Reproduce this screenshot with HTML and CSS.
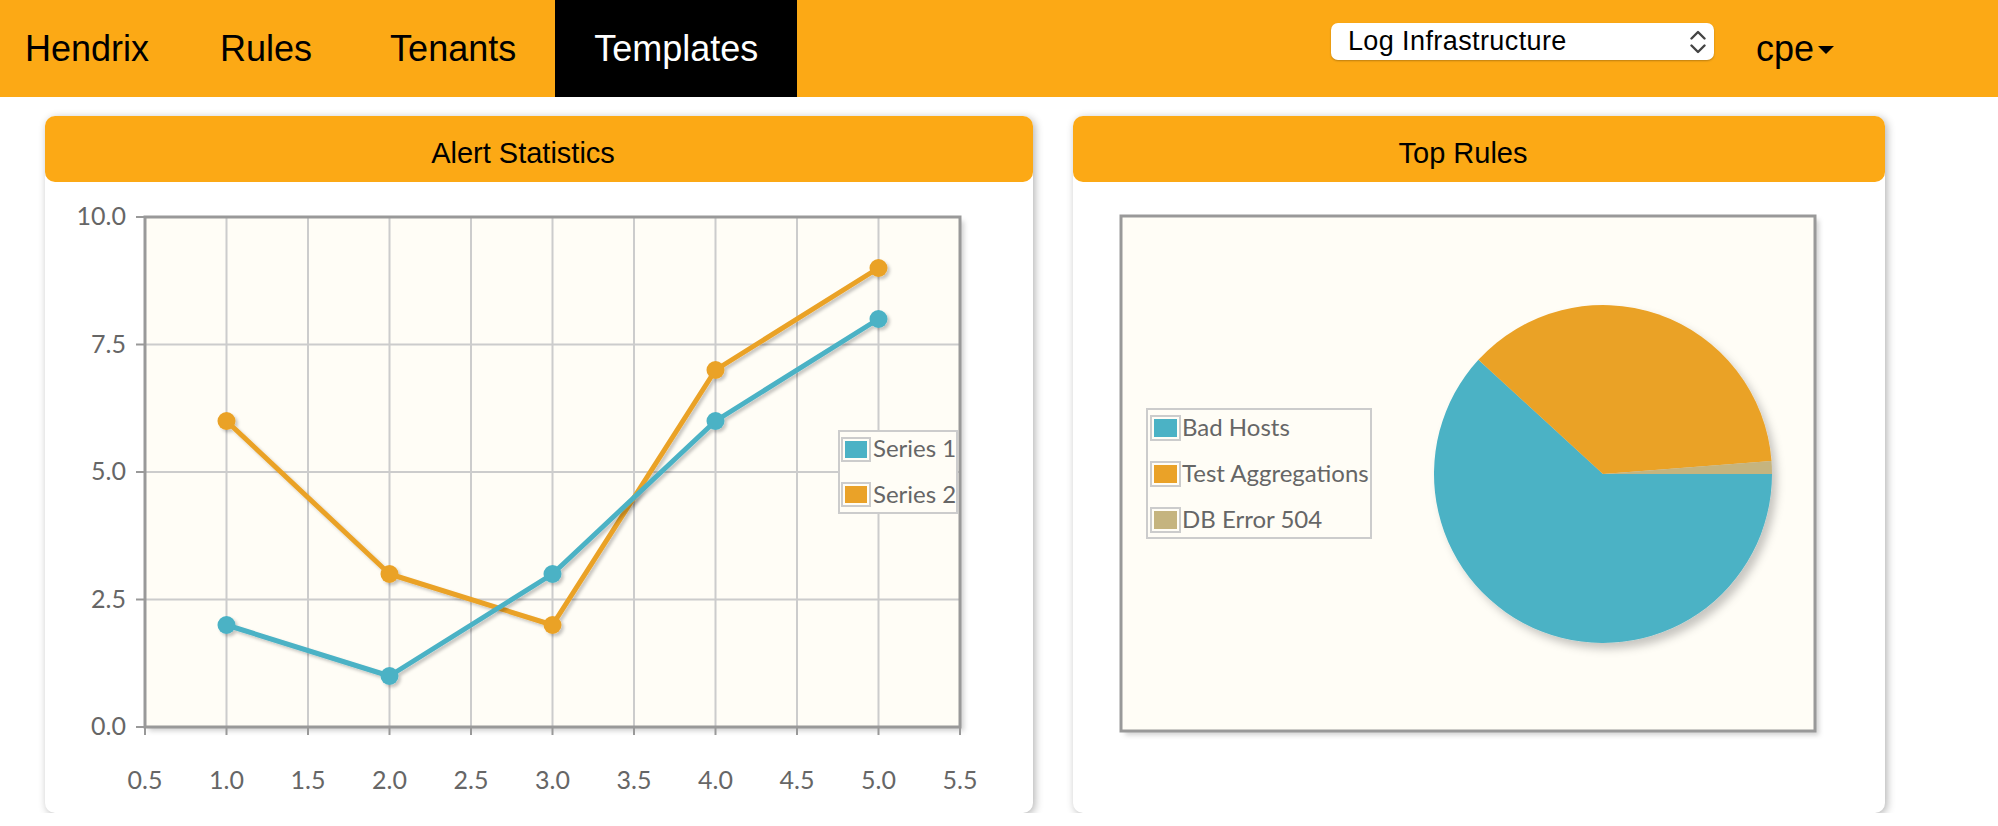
FILE: index.html
```html
<!DOCTYPE html>
<html lang="en">
<head>
<meta charset="utf-8">
<title>Hendrix - Templates</title>
<link rel="stylesheet" href="styles.css">
</head>
<body>
<nav class="navbar">
  <div class="nav-left">
    <a class="brand" href="#">Hendrix</a>
    <a class="nav-item" href="#">Rules</a>
    <a class="nav-item" href="#">Tenants</a>
    <a class="nav-item active" href="#">Templates</a>
  </div>
  <div class="nav-right">
    <div class="select">
      <span>Log Infrastructure</span>
      <svg class="chevrons" width="16" height="24" viewBox="0 0 16 24"><path d="M1.5 8.5 L8 2 L14.5 8.5 M1.5 15.5 L8 22 L14.5 15.5" fill="none" stroke="#444" stroke-width="2.4" stroke-linecap="round" stroke-linejoin="round"/></svg>
    </div>
    <div class="user">cpe<span class="caret"></span></div>
  </div>
</nav>

<main class="dashboard">
  <section class="card card-wide">
    <div class="card-header">Alert Statistics</div>
    <svg class="chart" width="988" height="631" viewBox="0 0 988 631">
      <defs>
        <filter id="frameShadow" x="-5%" y="-5%" width="115%" height="115%">
          <feDropShadow dx="4" dy="4" stdDeviation="2.5" flood-color="#000" flood-opacity="0.18"/>
        </filter>
        <filter id="lineShadow" x="-10%" y="-10%" width="120%" height="120%">
          <feDropShadow dx="2.5" dy="2.5" stdDeviation="1.6" flood-color="#000" flood-opacity="0.22"/>
        </filter>
      </defs>
      <rect x="100" y="35" width="815" height="510" fill="#fffdf6" filter="url(#frameShadow)"/>
      <g stroke="#cccccc" stroke-width="2">
        <line x1="181.5" y1="35" x2="181.5" y2="545"/>
        <line x1="263" y1="35" x2="263" y2="545"/>
        <line x1="344.5" y1="35" x2="344.5" y2="545"/>
        <line x1="426" y1="35" x2="426" y2="545"/>
        <line x1="507.5" y1="35" x2="507.5" y2="545"/>
        <line x1="589" y1="35" x2="589" y2="545"/>
        <line x1="670.5" y1="35" x2="670.5" y2="545"/>
        <line x1="752" y1="35" x2="752" y2="545"/>
        <line x1="833.5" y1="35" x2="833.5" y2="545"/>
        <line x1="100" y1="162.5" x2="915" y2="162.5"/>
        <line x1="100" y1="290" x2="915" y2="290"/>
        <line x1="100" y1="417.5" x2="915" y2="417.5"/>
      </g>
      <rect x="100" y="35" width="815" height="510" fill="none" stroke="#999999" stroke-width="3"/>
      <g stroke="#999999" stroke-width="2">
        <line x1="91" y1="35" x2="100" y2="35"/>
        <line x1="91" y1="162.5" x2="100" y2="162.5"/>
        <line x1="91" y1="290" x2="100" y2="290"/>
        <line x1="91" y1="417.5" x2="100" y2="417.5"/>
        <line x1="91" y1="545" x2="100" y2="545"/>
        <line x1="100" y1="545" x2="100" y2="553"/>
        <line x1="181.5" y1="545" x2="181.5" y2="553"/>
        <line x1="263" y1="545" x2="263" y2="553"/>
        <line x1="344.5" y1="545" x2="344.5" y2="553"/>
        <line x1="426" y1="545" x2="426" y2="553"/>
        <line x1="507.5" y1="545" x2="507.5" y2="553"/>
        <line x1="589" y1="545" x2="589" y2="553"/>
        <line x1="670.5" y1="545" x2="670.5" y2="553"/>
        <line x1="752" y1="545" x2="752" y2="553"/>
        <line x1="833.5" y1="545" x2="833.5" y2="553"/>
        <line x1="915" y1="545" x2="915" y2="553"/>
      </g>
      <g class="series" fill="#eaa228" filter="url(#lineShadow)">
        <polyline points="181.5,239 344.5,392 507.5,443 670.5,188 833.5,86" fill="none" stroke="#eaa228" stroke-width="5" stroke-linejoin="round"/>
        <circle cx="181.5" cy="239" r="9"/>
        <circle cx="344.5" cy="392" r="9"/>
        <circle cx="507.5" cy="443" r="9"/>
        <circle cx="670.5" cy="188" r="9"/>
        <circle cx="833.5" cy="86" r="9"/>
      </g>
      <g class="series" fill="#4bb2c5" filter="url(#lineShadow)">
        <polyline points="181.5,443 344.5,494 507.5,392 670.5,239 833.5,137" fill="none" stroke="#4bb2c5" stroke-width="5" stroke-linejoin="round"/>
        <circle cx="181.5" cy="443" r="9"/>
        <circle cx="344.5" cy="494" r="9"/>
        <circle cx="507.5" cy="392" r="9"/>
        <circle cx="670.5" cy="239" r="9"/>
        <circle cx="833.5" cy="137" r="9"/>
      </g>
      <g class="tick tick-y">
        <text x="81" y="43">10.0</text>
        <text x="81" y="170.5">7.5</text>
        <text x="81" y="298">5.0</text>
        <text x="81" y="425.5">2.5</text>
        <text x="81" y="553">0.0</text>
      </g>
      <g class="tick tick-x">
        <text x="100" y="607">0.5</text>
        <text x="181.5" y="607">1.0</text>
        <text x="263" y="607">1.5</text>
        <text x="344.5" y="607">2.0</text>
        <text x="426" y="607">2.5</text>
        <text x="507.5" y="607">3.0</text>
        <text x="589" y="607">3.5</text>
        <text x="670.5" y="607">4.0</text>
        <text x="752" y="607">4.5</text>
        <text x="833.5" y="607">5.0</text>
        <text x="915" y="607">5.5</text>
      </g>
      <g class="legend">
        <rect x="794" y="249" width="118" height="82" fill="#fffdf6" stroke="#cccccc" stroke-width="2"/>
        <rect x="797" y="256" width="28" height="23" fill="none" stroke="#cccccc" stroke-width="2"/>
        <rect x="800" y="259" width="22" height="17" fill="#4bb2c5"/>
        <text class="legend-text" x="828" y="275">Series 1</text>
        <rect x="797" y="301" width="28" height="23" fill="none" stroke="#cccccc" stroke-width="2"/>
        <rect x="800" y="304" width="22" height="17" fill="#eaa228"/>
        <text class="legend-text" x="828" y="321">Series 2</text>
      </g>
    </svg>
  </section>

  <section class="card card-narrow">
    <div class="card-header">Top Rules</div>
    <svg class="chart" width="812" height="631" viewBox="0 0 812 631">
      <defs>
        <filter id="frameShadow2" x="-5%" y="-5%" width="115%" height="115%">
          <feDropShadow dx="4" dy="4" stdDeviation="2.5" flood-color="#000" flood-opacity="0.18"/>
        </filter>
        <filter id="pieShadow" x="-10%" y="-10%" width="125%" height="125%">
          <feDropShadow dx="5" dy="6" stdDeviation="4" flood-color="#000" flood-opacity="0.22"/>
        </filter>
      </defs>
      <rect x="48" y="34" width="694" height="515" fill="#fffdf6" filter="url(#frameShadow2)"/>
      <rect x="48" y="34" width="694" height="515" fill="none" stroke="#999999" stroke-width="3"/>
      <g class="pie" filter="url(#pieShadow)">
        <path d="M530 292 L699 292 A169 169 0 1 1 405.4 177.8 Z" fill="#4bb2c5"/>
        <path d="M530 292 L405.4 177.8 A169 169 0 0 1 698.5 279 Z" fill="#eaa228"/>
        <path d="M530 292 L698.5 279 A169 169 0 0 1 699 292 Z" fill="#c5b47f"/>
      </g>
      <g class="legend">
        <rect x="74" y="227" width="224" height="129" fill="#fffdf6" stroke="#cccccc" stroke-width="2"/>
        <rect x="78" y="234" width="29" height="24" fill="none" stroke="#cccccc" stroke-width="2"/>
        <rect x="81" y="237" width="23" height="18" fill="#4bb2c5"/>
        <text class="legend-text" x="109" y="254">Bad Hosts</text>
        <rect x="78" y="280" width="29" height="24" fill="none" stroke="#cccccc" stroke-width="2"/>
        <rect x="81" y="283" width="23" height="18" fill="#eaa228"/>
        <text class="legend-text" x="109" y="300">Test Aggregations</text>
        <rect x="78" y="326" width="29" height="24" fill="none" stroke="#cccccc" stroke-width="2"/>
        <rect x="81" y="329" width="23" height="18" fill="#c5b47f"/>
        <text class="legend-text" x="109" y="346">DB Error 504</text>
      </g>
    </svg>
  </section>
</main>
</body>
</html>
```

FILE: styles.css
```css
* {
  box-sizing: border-box;
}

body {
  margin: 0;
  background: #ffffff;
  font-family: "Liberation Sans", Arial, Helvetica, sans-serif;
  color: #000;
}

.navbar {
  display: flex;
  height: 97px;
  background: #fca915;
}

.nav-left {
  display: flex;
}

.brand,
.nav-item {
  display: block;
  font-size: 36px;
  line-height: 97px;
  color: #000;
  text-decoration: none;
  white-space: nowrap;
}

.brand {
  padding: 0 32px 0 25px;
}

.nav-item {
  padding: 0 39px;
}

.nav-item.active {
  background: #000;
  color: #fff;
}

.nav-right {
  margin-left: auto;
  display: flex;
  align-items: flex-start;
  padding-right: 164px;
}

.select {
  margin-top: 23px;
  width: 383px;
  height: 37px;
  background: #fff;
  border-radius: 7px;
  display: flex;
  align-items: center;
  justify-content: space-between;
  padding: 0 8px 0 17px;
  font-size: 27px;
  letter-spacing: 0.4px;
  box-shadow: 0 1px 2px rgba(0, 0, 0, 0.25);
}

.chevrons {
  display: block;
}

.user {
  margin-left: 42px;
  display: flex;
  align-items: center;
  height: 97px;
  font-size: 36px;
}

.caret {
  width: 0;
  height: 0;
  margin-left: 4px;
  margin-top: 2px;
  border-top: 8px solid #000;
  border-left: 8px solid transparent;
  border-right: 8px solid transparent;
}

.dashboard {
  display: flex;
  gap: 40px;
  padding: 19px 0 0 45px;
}

.card {
  height: 697px;
  background: #fff;
  border-radius: 10px;
  box-shadow: 2px 2px 8px rgba(0, 0, 0, 0.3);
}

.card-wide {
  width: 988px;
}

.card-narrow {
  width: 812px;
}

.card-header {
  height: 66px;
  background: #fca915;
  border-radius: 10px;
  text-align: center;
  font-size: 29px;
  line-height: 58px;
  padding: 8px 32px 0 0;
}

.chart {
  display: block;
}

.tick,
.legend-text {
  font-family: Lato, "Open Sans", sans-serif;
  fill: #666666;
}

.tick {
  font-size: 25px;
}

.legend-text {
  font-size: 24px;
}

.tick-y text {
  text-anchor: end;
}

.tick-x text {
  text-anchor: middle;
}
```
